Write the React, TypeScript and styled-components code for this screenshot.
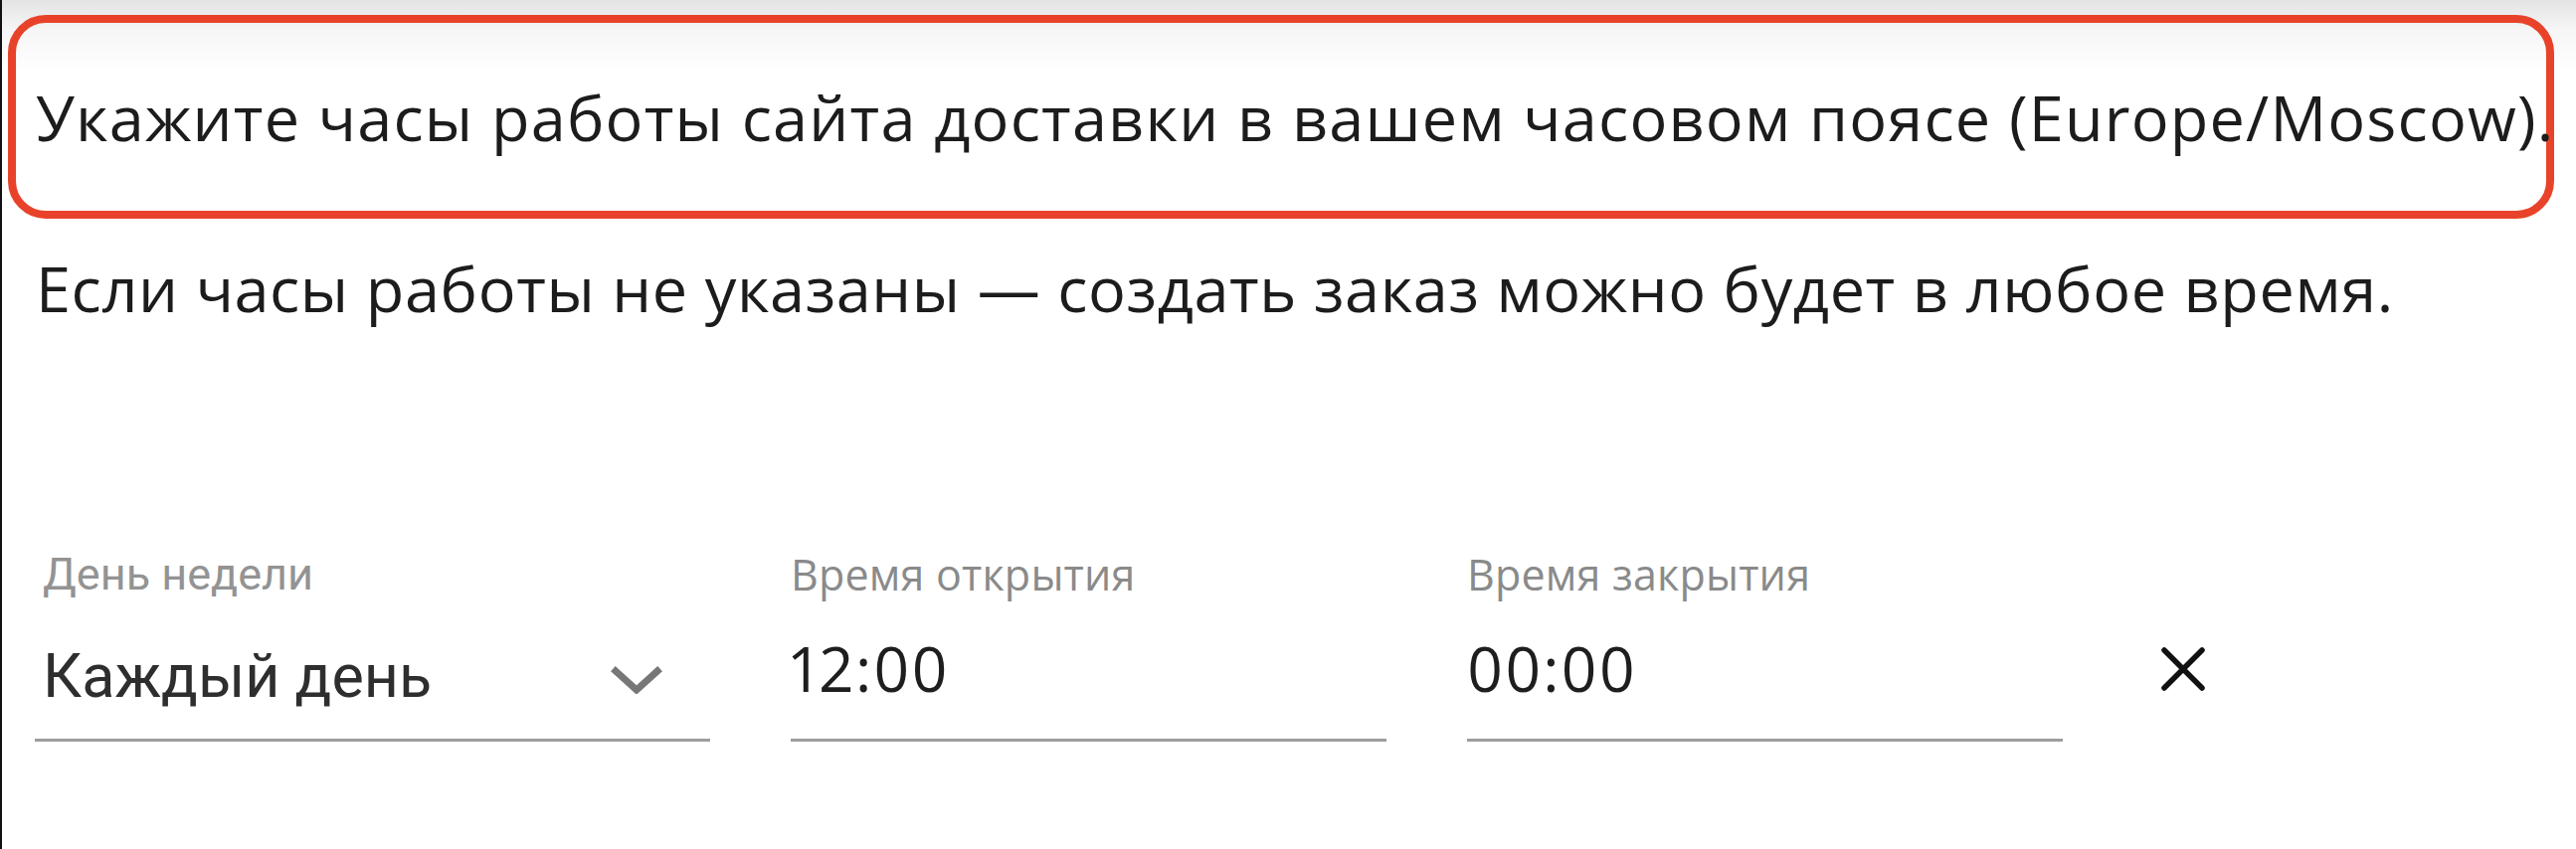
import React from "react";
import styled, { createGlobalStyle } from "styled-components";

const GlobalStyle = createGlobalStyle`
  html, body { margin: 0; padding: 0; background: #ffffff; }
  body { font-family: "Open Sans", "Noto Sans", sans-serif; }
  * { box-sizing: border-box; }
`;

const Page = styled.div`
  width: 2590px;
  height: 854px;
  border-left: 2px solid #111111;
  background: linear-gradient(#e4e4e4 0px, #f6f6f6 30px, #ffffff 72px);
  display: flex;
  flex-direction: column;
  overflow: hidden;
`;

const Notice = styled.div`
  margin: 15px 22px 0 6px;
  height: 205px;
  border: 8px solid #e8432a;
  border-radius: 38px;
  display: flex;
  align-items: center;
  padding-left: 20px;
`;

const Lead = styled.p`
  margin: 0;
  font-family: "Open Sans", sans-serif;
  font-weight: 370;
  font-size: 63px;
  line-height: 64px;
  letter-spacing: 1.2px;
  color: #1c1c1c;
  white-space: nowrap;
`;

const Hint = styled(Lead)`
  margin: 38px 0 0 34px;
  letter-spacing: 0.6px;
`;

const FieldRow = styled.div`
  display: flex;
  align-items: flex-start;
  gap: 81px;
  margin: 231px 0 0 33px;
`;

const Field = styled.div<{ $width: number }>`
  width: ${(p) => p.$width}px;
  display: flex;
  flex-direction: column;
`;

const Label = styled.span<{ $select?: boolean }>`
  height: 50px;
  line-height: 50px;
  font-family: ${(p) => (p.$select ? "Roboto, sans-serif" : '"Open Sans", sans-serif')};
  font-weight: ${(p) => (p.$select ? 400 : 370)};
  font-size: ${(p) => (p.$select ? 45 : 43)}px;
  letter-spacing: ${(p) => (p.$select ? 0 : 0.2)}px;
  color: ${(p) => (p.$select ? "#939393" : "#8a8a8a")};
  padding-left: ${(p) => (p.$select ? 8 : 0)}px;
  white-space: nowrap;
`;

const Control = styled.div<{ $select?: boolean }>`
  height: 143px;
  display: flex;
  align-items: flex-start;
  justify-content: space-between;
  border-bottom: 3px solid #9d9d9d;
  padding: ${(p) => (p.$select ? "45px 48px 0 8px" : "37px 0 0 0")};
`;

const Value = styled.span<{ $select?: boolean }>`
  font-family: ${(p) => (p.$select ? "Roboto, sans-serif" : '"Open Sans", sans-serif')};
  font-weight: ${(p) => (p.$select ? 400 : 370)};
  font-size: ${(p) => (p.$select ? 61 : 62)}px;
  line-height: 64px;
  letter-spacing: ${(p) => (p.$select ? 0 : 2)}px;
  font-variant-numeric: proportional-nums;
  color: ${(p) => (p.$select ? "#2e2e2e" : "#1e1e1e")};
  white-space: nowrap;
`;

const Chevron = styled.svg`
  width: 52px;
  height: 28px;
  margin-top: 22px;
  flex: none;
`;

const RemoveButton = styled.button`
  margin: 97px 0 0 17px;
  padding: 0;
  border: none;
  background: none;
  width: 46px;
  height: 46px;
  display: flex;
  cursor: pointer;
`;

export default function App() {
  return (
    <>
      <GlobalStyle />
      <Page>
        <Notice>
          <Lead>Укажите часы работы сайта доставки в вашем часовом поясе (Europe/Moscow).</Lead>
        </Notice>
        <Hint>Если часы работы не указаны — создать заказ можно будет в любое время.</Hint>
        <FieldRow>
          <Field $width={679}>
            <Label $select>День недели</Label>
            <Control $select>
              <Value $select>Каждый день</Value>
              <Chevron viewBox="0 0 52 28" aria-hidden>
                <polyline
                  points="5,5 26,24 47,5"
                  fill="none"
                  stroke="#777777"
                  strokeWidth="7"
                  strokeLinecap="square"
                  strokeLinejoin="miter"
                />
              </Chevron>
            </Control>
          </Field>
          <Field $width={599}>
            <Label>Время открытия</Label>
            <Control>
              <Value>12:00</Value>
            </Control>
          </Field>
          <Field $width={599}>
            <Label>Время закрытия</Label>
            <Control>
              <Value>00:00</Value>
            </Control>
          </Field>
          <RemoveButton aria-label="Удалить">
            <svg width="46" height="46" viewBox="0 0 46 46">
              <path d="M4 4 L42 42 M42 4 L4 42" stroke="#111111" strokeWidth="5.5" strokeLinecap="round" />
            </svg>
          </RemoveButton>
        </FieldRow>
      </Page>
    </>
  );
}
